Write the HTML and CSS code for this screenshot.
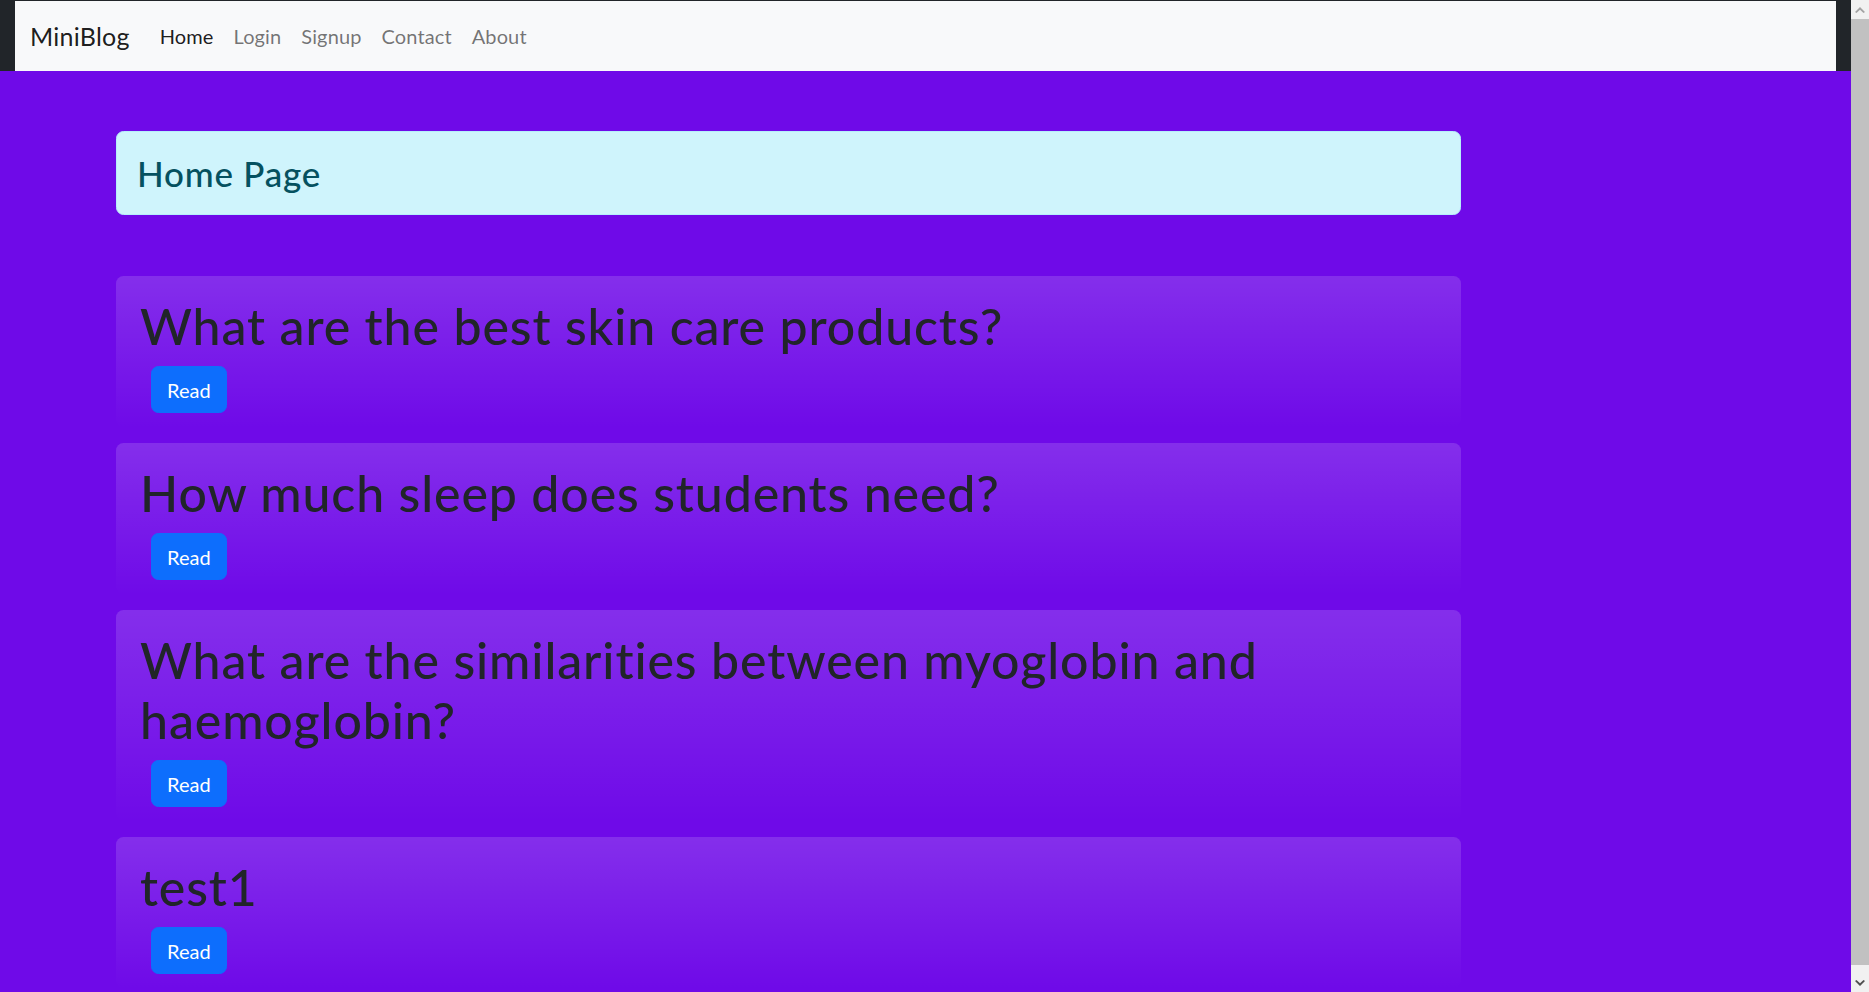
FILE: index.html
```html
<!DOCTYPE html>
<html lang="en">
<head>
<meta charset="utf-8">
<title>MiniBlog</title>
<link rel="stylesheet" href="styles.css">
</head>
<body>
<div class="window">
  <div class="page">
    <header class="topbar">
      <nav class="navbar">
        <a class="brand" href="#">MiniBlog</a>
        <ul class="nav">
          <li><a class="nav-link active" href="#">Home</a></li>
          <li><a class="nav-link" href="#">Login</a></li>
          <li><a class="nav-link" href="#">Signup</a></li>
          <li><a class="nav-link" href="#">Contact</a></li>
          <li><a class="nav-link" href="#">About</a></li>
        </ul>
      </nav>
    </header>
    <main class="main">
      <div class="content">
        <div class="alert"><h3>Home Page</h3></div>
        <div class="posts">
          <article class="post">
            <h1>What are the best skin care products?</h1>
            <a class="btn" href="#">Read</a>
          </article>
          <article class="post">
            <h1>How much sleep does students need?</h1>
            <a class="btn" href="#">Read</a>
          </article>
          <article class="post">
            <h1>What are the similarities between myoglobin and haemoglobin?</h1>
            <a class="btn" href="#">Read</a>
          </article>
          <article class="post">
            <h1>test1</h1>
            <a class="btn" href="#">Read</a>
          </article>
        </div>
      </div>
    </main>
  </div>
  <div class="scrollbar" aria-hidden="true">
    <div class="sb-btn sb-up">
      <svg width="10" height="6" viewBox="0 0 10 6"><path d="M0 5 L5 0 L10 5 L8.5 6 L5 2.8 L1.5 6 Z" fill="#a3a3a3"/></svg>
    </div>
    <div class="sb-track"><div class="sb-thumb"></div></div>
    <div class="sb-btn sb-down">
      <svg width="10" height="6" viewBox="0 0 10 6"><path d="M0 1 L5 6 L10 1 L8.5 0 L5 3.2 L1.5 0 Z" fill="#505050"/></svg>
    </div>
  </div>
</div>
</body>
</html>
```

FILE: styles.css
```css
* { box-sizing: border-box; }
html, body { margin: 0; padding: 0; height: 100%; overflow: hidden; }
body {
  font-family: Lato, "Segoe UI", "Liberation Sans", sans-serif;
  font-size: 20px;
  line-height: 1.5;
  letter-spacing: 0.006em;
  font-variant-ligatures: none;
  color: #212529;
  background: #6f0ae8;
}
.window { display: flex; height: 100vh; }
.page { flex: 1; min-width: 0; display: flex; flex-direction: column; overflow: hidden; background: #6f0ae8; }

.topbar { background: #212529; padding: 1px 15px 0 15px; }
.navbar {
  background: #f8f9fa;
  display: flex;
  align-items: center;
  padding: 10px 15px;
  height: 70px;
}
.brand {
  font-size: 25px;
  line-height: 37px;
  padding: 6px 0;
  margin-right: 20px;
  letter-spacing: 0.01em;
  color: rgba(0,0,0,.9);
  text-decoration: none;
}
.nav { display: flex; list-style: none; margin: 0; padding: 0; }
.nav-link {
  display: block;
  padding: 10px 10px;
  line-height: 30px;
  font-size: 20px;
  color: rgba(0,0,0,.55);
  text-decoration: none;
}
.nav-link.active { color: rgba(0,0,0,.9); }

.main { flex: 1; padding: 60px 0 0 116px; }
.content { width: 1345px; }
.alert {
  background: #cff4fc;
  border: 1px solid #b6effb;
  border-radius: 7.5px;
  padding: 20px;
  color: #055160;
}
.alert h3 { margin: 0; font-size: 35px; line-height: 42px; font-weight: 500; letter-spacing: 0.022em; }

.posts { margin-top: 61px; display: flex; flex-direction: column; gap: 15px; }
.post {
  background: #6f0ae8 linear-gradient(180deg, rgba(255,255,255,.15), rgba(255,255,255,0));
  border-radius: 7.5px;
  padding: 20px 24px 15px;
  display: flex;
  flex-direction: column;
  align-items: flex-start;
}
.post h1 {
  margin: 0 0 10px;
  font-size: 50px;
  line-height: 60px;
  font-weight: 500;
  letter-spacing: 0.018em;
  color: #212529;
}
.btn {
  margin-left: 11px;
  display: inline-block;
  background: #0d6efd;
  border: 1px solid #0d6efd;
  color: #fff;
  font-size: 20px;
  line-height: 30px;
  padding: 7.5px 15px;
  border-radius: 7.5px;
  letter-spacing: 0;
  text-decoration: none;
}

.scrollbar { width: 18px; background: #f1f1f1; display: flex; flex-direction: column; }
.sb-btn { display: flex; align-items: center; justify-content: center; background: #f1f1f1; }
.sb-up { height: 19px; }
.sb-down { height: 18px; }
.sb-track { flex: 1; padding-bottom: 9px; display: flex; }
.sb-thumb { flex: 1; background: #c1c1c1; }
```
